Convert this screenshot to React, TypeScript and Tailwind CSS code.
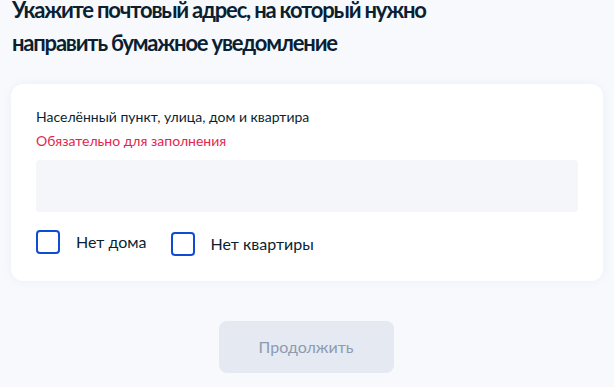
import React, { useState } from "react";

const Check = ({ label, className = "" }: { label: string; className?: string }) => {
  const [on, setOn] = useState(false);
  return (
    <label className={`flex items-center cursor-pointer ${className}`}>
      <span
        onClick={() => setOn(!on)}
        className={`w-6 h-6 rounded-[4px] border-2 border-[#0d4cd3] ${on ? "bg-[#0d4cd3]" : "bg-white"}`}
      />
      <span className="ml-4 text-[16px] text-[#0b1f33]">{label}</span>
    </label>
  );
};

export default function App() {
  return (
    <div className="min-h-[387px] w-[614px] bg-[#f8f9fd] font-['Lato','Noto_Sans',sans-serif] overflow-hidden">
      <h1 className="pl-3 text-[22px] tracking-[-1.2px] font-bold text-[#0b1f33]">
        <span className="block leading-[20px]">Укажите почтовый адрес, на который нужно</span>
        <span className="block leading-[32px] mt-[7px]">направить бумажное уведомление</span>
      </h1>
      <div className="mx-[11px] mt-[25px] bg-white rounded-xl shadow-[0_0_8px_rgba(160,180,220,0.15)] px-[25px] pt-[23px] pb-[25px]">
        <p className="text-[14px] leading-[20px] text-[#0b1f33]">Населённый пункт, улица, дом и квартира</p>
        <p className="mt-[4px] text-[14px] leading-[20px] text-[#e3264e]">Обязательно для заполнения</p>
        <div className="mt-[9px] h-[52px] rounded-[4px] bg-[#f5f6fa]" />
        <div className="mt-[18px] flex items-start">
          <Check label="Нет дома" />
          <Check label="Нет квартиры" className="ml-[24px] mt-[2px]" />
        </div>
      </div>
      <div className="flex justify-center mt-[40px] pr-[2px]">
        <button className="w-[175px] h-[52px] rounded-lg bg-[#e4e9f2] text-[16px] text-[#8d9bb0]">
          Продолжить
        </button>
      </div>
    </div>
  );
}
